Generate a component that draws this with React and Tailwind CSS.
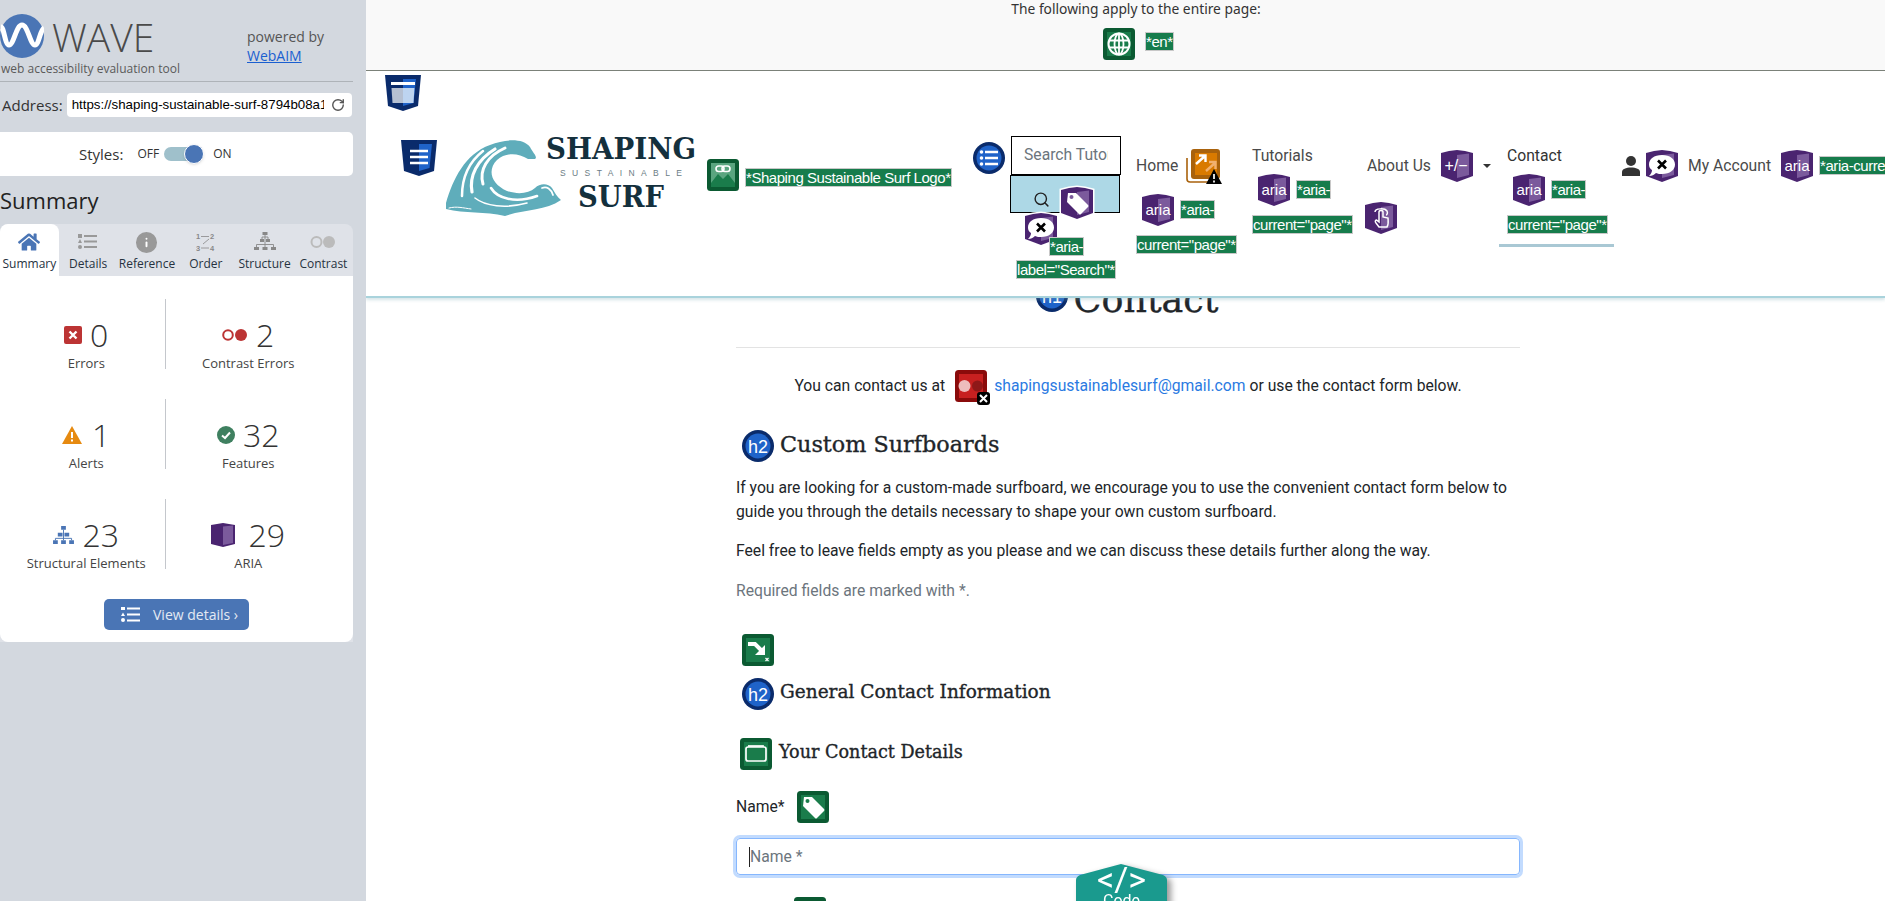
import React from "react";
import { Info, RotateCw, Search } from "lucide-react";
import { FaHome } from "react-icons/fa";

const SHIELD = "M0 3 L8 1 L16 0 L24 1 L32 3 L32 26 L16 32 L0 26 Z";

function AriaBase({ size = 32, children, outline = false }) {
  return (
    <svg width={size} height={size} viewBox="0 0 32 32" className="block shrink-0 overflow-visible">
      {outline && <path d={SHIELD} fill="#4a2470" stroke="#fff" strokeWidth="3" />}
      <path d={SHIELD} fill="#4a2470" />
      <path d="M16 5 L28 3.5 L28 25 L16 28 Z" fill="#7b5a9c" />
      {children}
    </svg>
  );
}

function AriaIcon() {
  return (
    <AriaBase>
      <text x="16" y="21" textAnchor="middle" fill="#fff" fontSize="15" fontFamily="Liberation Sans, sans-serif">
        aria
      </text>
    </AriaBase>
  );
}

function TagShape({ fill }) {
  return (
    <g>
      <path d="M7 6 L15 6 L27 18 Q28 19 27 20 L20 27 Q19 28 18 27 L6 15 Z" fill="#fff" />
      <circle cx="10.5" cy="10" r="2" fill={fill} />
    </g>
  );
}

function BubbleX() {
  return (
    <g>
      <path d="M16 5 C24 5 29 9 29 14.5 C29 20 24 24 16 24 C14 24 12 24 10 23 C8 25 6 26 3 26 C5 24 6 22 6 20 C4 19 3 17 3 14.5 C3 9 8 5 16 5 Z" fill="#fff" />
      <path d="M12 10.5 L20 18.5 M20 10.5 L12 18.5" stroke="#000" strokeWidth="2.6" />
    </g>
  );
}

function BlueShield({ lines = false }) {
  return (
    <svg width="36" height="36" viewBox="0 0 36 36" className="block shrink-0">
      <path d="M0 0 L36 0 L33 31 L18 36 L3 31 Z" fill="#0a2b6b" />
      <path d="M18 4 L31 4 L28.5 28 L18 31 Z" fill="#1f63c9" />
      {lines ? (
        <path d="M9 11 H27 M9 17 H27 M9 23 H27" stroke="#fff" strokeWidth="2.6" />
      ) : (
        <g>
          <path d="M6 7 H30 V10 H6 Z" fill="#fff" />
          <path d="M6.5 13 H18 V28 H7.5 Z" fill="#b5c0d2" />
          <path d="M18 13 H29.5 L28.5 28 H18 Z" fill="#bdd4f0" />
        </g>
      )}
    </svg>
  );
}

function GreenBox({ children }) {
  return (
    <svg width="32" height="32" viewBox="0 0 32 32" className="block shrink-0">
      <rect width="32" height="32" rx="3.5" fill="#0b5a32" />
      <rect x="4" y="4" width="24" height="24" fill="#1a7c4b" />
      {children}
    </svg>
  );
}

function HeadingIcon({ n }) {
  return (
    <svg width="32" height="32" viewBox="0 0 32 32" className="block shrink-0">
      <circle cx="16" cy="16" r="16" fill="#0a2b6b" />
      <circle cx="16" cy="16" r="12.5" fill="#1f63c9" />
      <text x="16" y="22.5" textAnchor="middle" fill="#fff" fontSize="18" fontFamily="Liberation Sans, sans-serif">
        {n}
      </text>
    </svg>
  );
}

function Lbl({ children }) {
  return (
    <span className="inline-block h-[19px] whitespace-nowrap border border-[#c8c8c8] bg-[#167c4c] font-['Liberation_Sans',sans-serif] text-[15px] leading-[17px] tracking-[-0.45px] text-white">
      {children}
    </span>
  );
}

function WaveLogo() {
  return (
    <svg width="255" height="84" viewBox="0 0 255 84" className="block shrink-0">
      <path
        d="M1 67 C8 43 20 18 45 9 C60 3 78 2 85 11 C88 17 93 21 90 23 L83 23 C72 16 60 17 52 24 C42 34 46 48 62 55 C74 59 84 57 90 52 C95 47 103 47 107 52 C110 57 112 61 116 64 C100 75 80 73 60 80 C40 75 20 78 1 73 Z"
        fill="#5fadbb"
      />
      <g fill="none" stroke="#fff" strokeLinecap="round">
        <path d="M17 60 C17 42 24 26 38 15" strokeWidth="2.5" />
        <path d="M27 56 C24 40 32 24 50 13" strokeWidth="3.2" />
        <path d="M38 48 C34 34 42 20 60 12" strokeWidth="3" />
        <path d="M46 52 C52 62 70 68 92 60" strokeWidth="2.6" />
        <path d="M30 62 C40 70 60 73 82 67" strokeWidth="1.6" />
        <path d="M97 52 C102 50 106 53 108 59" strokeWidth="1.8" />
        <path d="M4 72 C12 70 18 72 26 73" strokeWidth="1" />
      </g>
      <text x="101" y="23" fill="#14303d" fontFamily="DejaVu Serif, serif" fontWeight="700" fontSize="29" textLength="150" lengthAdjust="spacingAndGlyphs">
        SHAPING
      </text>
      <text x="115" y="40" fill="#6b7d85" fontFamily="Liberation Sans, sans-serif" fontSize="8.5" textLength="122">
        SUSTAINABLE
      </text>
      <text x="133" y="71" fill="#14303d" fontFamily="DejaVu Serif, serif" fontWeight="700" fontSize="29" textLength="86" lengthAdjust="spacingAndGlyphs">
        SURF
      </text>
    </svg>
  );
}

function NavAria({ first = "*aria-", second = 'current="page"*' }) {
  return (
    <>
      <div className="mt-3 flex">
        <div className="ml-[6px]">
          <AriaIcon />
        </div>
        <div className="ml-[6px] mt-[4px]">
          <Lbl>{first}</Lbl>
        </div>
      </div>
      <div className="mt-[7px]">
        <Lbl>{second}</Lbl>
      </div>
    </>
  );
}

function Tab({ icon, label, active = false }) {
  return (
    <div
      className={
        "flex h-[52px] w-[58.8px] flex-col items-center pt-[6px] " +
        (active ? "rounded-t-lg bg-white" : "")
      }
    >
      <div className="flex h-[24px] items-center">{icon}</div>
      <div className="mt-[2px] whitespace-nowrap text-[12px] leading-[16px] text-[#26323f]">{label}</div>
    </div>
  );
}

function Stat({ icon, num, label, gap = "gap-2", left = false }) {
  return (
    <div className={"flex h-[70px] flex-col items-center " + (left ? "border-r border-[#c4c7cc] pl-[8px]" : "")}>
      <div className={"mt-[18px] flex h-[36px] items-center " + gap}>
        {icon}
        <span className="text-[32px] font-light leading-[36px] text-[#333]">{num}</span>
      </div>
      <div className="mt-[1px] whitespace-nowrap text-[13px] leading-[18px] text-[#444]">{label}</div>
    </div>
  );
}

function Sidebar() {
  return (
    <aside className="flex h-[901px] w-[366px] shrink-0 flex-col bg-[#d3d8df] font-['Open_Sans',sans-serif]">
      <div className="flex h-[82px] w-[353px] border-b border-[#aeb3b8]">
        <div className="w-[247px] shrink-0">
          <div className="mt-[14px] flex h-[44px]">
            <svg width="44" height="44" viewBox="0 0 44 44" className="block shrink-0">
              <circle cx="22" cy="22" r="22" fill="#4a75b5" />
              <path d="M1 13 C4 13 5 31 9 31 C14 31 16 11 22 11 C28 11 30 31 35 31 C39 31 40 16 44 14" fill="none" stroke="#fff" strokeWidth="5" />
            </svg>
            <span className="ml-[8px] mt-[1px] text-[39px] font-light leading-[44px] text-[#4a4a4a]">WAVE</span>
          </div>
          <div className="ml-[1px] mt-[2px] whitespace-nowrap text-[12px] leading-[18px] text-[#5a5a5a]">
            web accessibility evaluation tool
          </div>
        </div>
        <div className="pt-[27px] text-[14px] leading-[19px] text-[#555]">
          <div>powered by</div>
          <div className="text-[#1a5fd0] underline">WebAIM</div>
        </div>
      </div>

      <div className="mt-[11px] flex h-[24px] w-[353px] items-center">
        <span className="ml-[2px] text-[15px] text-[#333]">Address:</span>
        <div className="ml-[4px] flex h-[24px] w-[285px] items-center rounded-[4px] bg-white pl-[5px]">
          <div className="w-[252px] overflow-hidden whitespace-nowrap font-['Liberation_Sans',sans-serif] text-[13.3px] text-black">
            https://shaping-sustainable-surf-8794b08a1c2f.herokuapp.com/contact
          </div>
          <RotateCw size={14} className="ml-[7px] text-[#555]" strokeWidth={2.4} />
        </div>
      </div>

      <div className="mt-[15px] flex h-[44px] w-[353px] items-center rounded-r-[5px] bg-white">
        <span className="ml-[79px] text-[15px] text-[#333]">Styles:</span>
        <span className="ml-[14px] text-[12px] text-[#333]">OFF</span>
        <div className="relative ml-[5px] h-[14px] w-[34px] rounded-full bg-[#9fc0cb]">
          <div className="absolute left-[20px] top-[-3px] h-[20px] w-[20px] rounded-full border border-white bg-[#4a75b5] shadow" />
        </div>
        <span className="ml-[15px] text-[12px] text-[#333]">ON</span>
      </div>

      <h2 className="mt-[1px] text-[22px] leading-[47px] text-[#222]">Summary</h2>

      <div className="w-[353px] rounded-t-lg bg-[#dfe2e8]">
        <div className="flex">
          <Tab active label="Summary" icon={<FaHome size={22} color="#4a75b5" />} />
          <Tab
            label="Details"
            icon={
              <svg width="20" height="16" viewBox="0 0 20 16">
                <path d="M0 0 H4 V4 H0 Z M0 13 a2 2 0 1 0 4 0 a2 2 0 1 0 -4 0 Z M2 5 L4 9 H0 Z" fill="#999" />
                <path d="M6 2 H19 M6 7.5 H19 M6 13 H19" stroke="#999" strokeWidth="2" />
              </svg>
            }
          />
          <Tab label="Reference" icon={<Info size={23} fill="#999" stroke="#999" className="[&>path]:stroke-white" />} />
          <Tab
            label="Order"
            icon={
              <svg width="20" height="20" viewBox="0 0 20 20" fontSize="7.5" fontWeight="700" fill="#888" fontFamily="Liberation Sans, sans-serif">
                <text x="0" y="7">1</text>
                <text x="14" y="7">2</text>
                <text x="0" y="19">3</text>
                <text x="14" y="19">4</text>
                <path d="M5 4.5 H13 M13 7 L7 12 M5 16 H13" stroke="#888" strokeWidth="0.8" fill="none" />
              </svg>
            }
          />
          <Tab
            label="Structure"
            icon={
              <svg width="22" height="20" viewBox="0 0 22 20" fill="#888">
                <path d="M8.5 0 H13.5 V3 H8.5 Z M6 7 H10 V10 H6 Z M12 7 H16 V10 H12 Z M0 15 H5 V18 H0 Z M8.5 15 H13.5 V18 H8.5 Z M17 15 H22 V18 H17 Z" />
                <path d="M11 3 V15 M8 5 H14 V7 M8 5 V7 M2.5 15 V12.5 H19.5 V15" stroke="#888" strokeWidth="0.9" fill="none" />
              </svg>
            }
          />
          <Tab
            label="Contrast"
            icon={
              <svg width="26" height="14" viewBox="0 0 26 14">
                <circle cx="6.5" cy="7" r="5" fill="none" stroke="#bbb" strokeWidth="2" />
                <circle cx="19" cy="7" r="6" fill="#bbb" />
              </svg>
            }
          />
        </div>

        <div className="h-[366px] rounded-b-lg bg-white pt-[23px]">
          <div className="grid w-[331px] grid-cols-2 gap-y-[30px]">
            <Stat
              left
              num="0"
              label="Errors"
              icon={
                <svg width="18" height="18" viewBox="0 0 18 18">
                  <rect width="18" height="18" rx="2" fill="#bc3434" />
                  <path d="M5.5 5.5 L12.5 12.5 M12.5 5.5 L5.5 12.5" stroke="#fff" strokeWidth="2.4" />
                </svg>
              }
            />
            <Stat
              num="2"
              label="Contrast Errors"
              gap="gap-[9px]"
              icon={
                <svg width="25" height="14" viewBox="0 0 25 14">
                  <circle cx="6" cy="7" r="4.8" fill="none" stroke="#bc3434" strokeWidth="2" />
                  <circle cx="19" cy="7" r="6" fill="#bc3434" />
                </svg>
              }
            />
            <Stat
              left
              num="1"
              label="Alerts"
              gap="gap-[10px]"
              icon={
                <svg width="20" height="18" viewBox="0 0 20 18">
                  <path d="M10 0 L20 18 H0 Z" fill="#e68a10" />
                  <path d="M10 6 V12 M10 13.5 V15.5" stroke="#fff" strokeWidth="2" />
                </svg>
              }
            />
            <Stat
              num="32"
              label="Features"
              icon={
                <svg width="18" height="18" viewBox="0 0 18 18">
                  <circle cx="9" cy="9" r="9" fill="#3f8060" />
                  <path d="M5 9.5 L8 12 L13 6.5" stroke="#fff" strokeWidth="2" fill="none" />
                </svg>
              }
            />
            <Stat
              left
              num="23"
              label="Structural Elements"
              icon={
                <svg width="21" height="19" viewBox="0 0 22 20" fill="#4a75b5">
                  <path d="M8.5 0 H13.5 V4 H8.5 Z M5 7 H10 V11 H5 Z M12 7 H17 V11 H12 Z M0 15 H5 V19 H0 Z M8.5 15 H13.5 V19 H8.5 Z M17 15 H22 V19 H17 Z" />
                  <path d="M11 4 V15 M2.5 15 V13 H19.5 V15" stroke="#4a75b5" strokeWidth="1" fill="none" />
                </svg>
              }
            />
            <Stat
              num="29"
              label="ARIA"
              gap="gap-[13px]"
              icon={
                <svg width="24" height="24" viewBox="0 0 24 24">
                  <path d="M0 2 L12 0 L24 2 V21 L12 24 L0 21 Z" fill="#4a2470" />
                  <path d="M12 3.5 L22 2.5 V20 L12 22 Z" fill="#7b5a9c" />
                </svg>
              }
            />
          </div>

          <button className="mx-auto mt-[30px] flex h-[31px] w-[145px] items-center rounded-[5px] bg-[#4a75b5] pl-[17px] text-[14px] text-[#e4eaf3]">
            <svg width="19" height="15" viewBox="0 0 19 15" fill="#fff" className="shrink-0">
              <path d="M0 0 H4 V3 H0 Z M2 5.5 L4 9 H0 Z M0 13 a2 2 0 1 0 4 0 a2 2 0 1 0 -4 0 Z" />
              <path d="M6 1.5 H19 M6 7.5 H19 M6 13.5 H19" stroke="#fff" strokeWidth="2" />
            </svg>
            <span className="ml-[13px] whitespace-nowrap">View details ›</span>
          </button>
        </div>
      </div>
    </aside>
  );
}

function TopBand() {
  return (
    <div className="h-[71px] border-b border-[#7c8279] bg-[#f9f9f9] text-[13.8px]">
      <div className="ml-[645px] w-[250px] whitespace-nowrap text-center leading-[18px] text-[#333]">
        The following apply to the entire page:
      </div>
      <div className="ml-[737px] mt-[10px] flex">
        <GreenBox>
          <circle cx="16" cy="16" r="10.5" fill="none" stroke="#fff" strokeWidth="2" />
          <ellipse cx="16" cy="16" rx="4.5" ry="10.5" fill="none" stroke="#fff" strokeWidth="1.8" />
          <path d="M6 12.5 H26 M6 19.5 H26 M16 5.5 V26.5" stroke="#fff" strokeWidth="1.8" />
        </GreenBox>
        <div className="ml-[10px] mt-[4px]">
          <Lbl>*en*</Lbl>
        </div>
      </div>
    </div>
  );
}

function Header() {
  return (
    <header className="relative z-10 h-[227px] overflow-hidden border-b-2 border-[#a9d3dc] bg-white font-['Roboto',sans-serif] text-[15.7px] text-[#4a4a4a] shadow-[0_2px_3px_rgba(120,170,180,0.3)]">
      <div className="ml-[19px] pt-[4px]">
        <BlueShield />
      </div>

      <div className="ml-[35px] mt-[25px] flex w-[1600px] items-start">
        <div className="mt-[4px] shrink-0">
          <BlueShield lines />
        </div>
        <div className="ml-[8px] shrink-0">
          <WaveLogo />
        </div>

        <div className="ml-[7px] mt-[23px] shrink-0">
          <GreenBox>
            <path d="M4 4 H28 V24 L21 15 L16 20 L11 15 L4 24 Z" fill="#5aa57f" />
            <rect x="9" y="7" width="8" height="5.5" rx="2.7" fill="none" stroke="#fff" strokeWidth="1.6" />
            <rect x="15" y="7" width="8" height="5.5" rx="2.7" fill="none" stroke="#fff" strokeWidth="1.6" />
          </GreenBox>
        </div>
        <div className="ml-[6px] mt-[30px] w-[206px] shrink-0">
          <Lbl>*Shaping Sustainable Surf Logo*</Lbl>
        </div>

        <div className="ml-[22px] mt-[6px] shrink-0">
          <svg width="32" height="32" viewBox="0 0 32 32" className="block">
            <circle cx="16" cy="16" r="16" fill="#0a2b6b" />
            <circle cx="16" cy="16" r="12.5" fill="#1f63c9" />
            <path d="M12 10 H25 M12 16 H25 M12 22 H25" stroke="#fff" strokeWidth="2.4" />
            <circle cx="8.5" cy="10" r="1.8" fill="#fff" />
            <circle cx="8.5" cy="16" r="1.8" fill="#fff" />
            <circle cx="8.5" cy="22" r="1.8" fill="#fff" />
          </svg>
        </div>

        {/* search */}
        <div className="ml-[5px] w-[111px] shrink-0">
          <div className="ml-[1px] h-[39px] w-[110px] border border-black pl-[12px] leading-[36px] text-[#6c757d]">
            <div className="w-[84px] overflow-hidden whitespace-nowrap">Search Tutorials</div>
          </div>
          <div className="relative h-[38px] w-[110px] border border-black bg-[#add8e6]">
            <Search size={17} strokeWidth={2} className="absolute left-[22px] top-[15px] text-[#222]" />
            <div className="absolute left-[50px] top-[11px]">
              <AriaBase outline>
                <TagShape fill="#7b5a9c" />
              </AriaBase>
            </div>
          </div>
          <div className="relative h-[66px]">
            <div className="absolute left-[15px] top-0">
              <AriaBase outline>
                <BubbleX />
              </AriaBase>
            </div>
            <div className="absolute left-[39px] top-[22px]">
              <Lbl> *aria-</Lbl>
            </div>
            <div className="absolute left-[6px] top-[45px]">
              <Lbl>label="Search"*</Lbl>
            </div>
          </div>
        </div>

        {/* home */}
        <div className="ml-[15px] mt-[14px] w-[100px] shrink-0">
          <div className="flex h-[32px] items-center">
            <span>Home</span>
            <div className="relative ml-[9px]">
              <svg width="33" height="35" viewBox="0 0 33 35" className="block overflow-visible">
                <path d="M0 9 V30 Q0 33 3 33 H24" fill="none" stroke="#a9620c" strokeWidth="1.6" />
                <rect x="4" y="0" width="29" height="30" rx="3" fill="#a9620c" />
                <rect x="8" y="4" width="22" height="22" fill="#d97a00" />
                <path d="M9 15 L18 7 M12 6.5 H18.5 V13" fill="none" stroke="#fff" strokeWidth="2.4" />
                <path d="M19 22 L28 14 M22 13 H28.5 V20" fill="none" stroke="#f0b070" strokeWidth="2.4" />
                <path d="M27 20 L35 35 H19 Z" fill="#000" />
                <path d="M27 25 V30 M27 31.5 V33.5" stroke="#fff" strokeWidth="1.7" />
              </svg>
            </div>
          </div>
          <NavAria />
        </div>

        {/* tutorials */}
        <div className="ml-[16px] mt-[9px] w-[100px] shrink-0">
          <div className="leading-[22px]">Tutorials</div>
          <div className="-mt-[5px]">
            <NavAria />
          </div>
        </div>

        {/* about */}
        <div className="ml-[15px] mt-[14px] w-[125px] shrink-0">
          <div className="flex h-[32px] items-center">
            <span className="whitespace-nowrap">About Us</span>
            <div className="ml-[10px]">
              <AriaBase>
                <text x="15" y="21" textAnchor="middle" fill="#fff" fontSize="16" fontFamily="Liberation Sans, sans-serif">
                  +/−
                </text>
              </AriaBase>
            </div>
            <span className="ml-[10px] h-0 w-0 border-x-[4px] border-t-[4px] border-x-transparent border-t-[#333]" />
          </div>
          <div className="-ml-[2px] mt-[20px]">
            <AriaBase>
              <path d="M10 10 C10 6 20 6 22 9 C23 11 22 13 21 13 M14 10 V20 L11.5 18 C10 18 10 20 11 21 L14 25 H22 C24 22 23 18 23 16 L18 15 V10 C18 8 14 8 14 10 Z" fill="none" stroke="#fff" strokeWidth="1.5" />
            </AriaBase>
          </div>
        </div>

        {/* contact */}
        <div className="ml-[7px] mt-[9px] h-[102px] w-[115px] shrink-0 border-b-[3px] border-[#a9c8d4] pl-[8px]">
          <div className="leading-[22px] text-[#333]">Contact</div>
          <div className="-mt-[5px]">
            <NavAria />
          </div>
        </div>

        {/* account */}
        <div className="ml-[8px] mt-[14px] flex h-[32px] shrink-0 items-center">
          <svg width="18" height="20" viewBox="0 0 18 20" className="block shrink-0">
            <circle cx="9" cy="5" r="5" fill="#333" />
            <path d="M0 20 V16 C0 13 4 11.5 9 11.5 C14 11.5 18 13 18 16 V20 Z" fill="#333" />
          </svg>
          <div className="ml-[6px]">
            <AriaBase>
              <BubbleX />
            </AriaBase>
          </div>
          <span className="ml-[10px] whitespace-nowrap">My Account</span>
          <div className="ml-[10px]">
            <AriaIcon />
          </div>
          <div className="ml-[6px]">
            <Lbl>*aria-current="page"*</Lbl>
          </div>
        </div>
      </div>
    </header>
  );
}

function Content() {
  const serif = "font-['DejaVu_Serif',serif] text-[#212529] [-webkit-text-stroke:0.35px_#212529]";
  return (
    <div className="-mt-[18px] ml-[370px] w-[784px] font-['Roboto',sans-serif] text-[15.7px] leading-[24px] text-[#212529]">
      <div className="flex h-[50px] items-start justify-center">
        <div className="-ml-[2px] flex items-start">
          <HeadingIcon n="h1" />
          <span className={"ml-[6px] text-[36.5px] leading-[40px] " + serif}>Contact</span>
        </div>
      </div>
      <hr className="mt-[17px] border-t border-[#e3e3e3]" />

      <div className="mt-[22px] flex h-[32px] items-center justify-center whitespace-nowrap">
        <span>You can contact us at</span>
        <div className="relative ml-[10px] mr-[7px]">
          <svg width="32" height="32" viewBox="0 0 32 32" className="block">
            <rect width="32" height="32" rx="3.5" fill="#8a0b0b" />
            <rect x="4" y="4" width="24" height="24" fill="#c72020" />
            <circle cx="9.5" cy="16" r="6" fill="#eebcbc" />
            <circle cx="22.5" cy="16" r="5.5" fill="#8f1818" />
          </svg>
          <div className="absolute left-[22px] top-[22px] flex h-[13px] w-[13px] items-center justify-center rounded-[3px] bg-black">
            <svg width="9" height="9" viewBox="0 0 9 9">
              <path d="M1 1 L8 8 M8 1 L1 8" stroke="#fff" strokeWidth="2" />
            </svg>
          </div>
        </div>
        <a className="text-[#2a7ae2]">shapingsustainablesurf@gmail.com</a>
        <span className="ml-[4px]">or use the contact form below.</span>
      </div>

      <div className="ml-[6px] mt-[28px] flex h-[32px] items-center">
        <HeadingIcon n="h2" />
        <span className={"ml-[6px] pb-[4px] text-[22.3px] " + serif}>Custom Surfboards</span>
      </div>
      <p className="mt-[14px]">
        If you are looking for a custom-made surfboard, we encourage you to use the convenient contact form below to
        guide you through the details necessary to shape your own custom surfboard.
      </p>
      <p className="mt-[15px]">Feel free to leave fields empty as you please and we can discuss these details further along the way.</p>
      <p className="mt-[16px] text-[#6c757d]">Required fields are marked with *.</p>

      <div className="ml-[6px] mt-[31px]">
        <GreenBox>
          <path d="M6 10 H13 L20 17" fill="none" stroke="#fff" strokeWidth="4" />
          <path d="M23 11 V21 H13 Z" fill="#fff" />
          <path d="M23.5 24 L26.5 27 M26.5 24 L23.5 27" stroke="#fff" strokeWidth="1.2" />
        </GreenBox>
      </div>
      <div className="ml-[6px] mt-[12px] flex h-[32px] items-center">
        <HeadingIcon n="h2" />
        <span className={"ml-[6px] pb-[4px] text-[18.5px] " + serif}>General Contact Information</span>
      </div>
      <div className="ml-[4px] mt-[28px] flex h-[32px] items-center">
        <GreenBox>
          <rect x="6" y="9" width="20" height="14" rx="2" fill="none" stroke="#fff" strokeWidth="1.7" />
          <path d="M8 8 H24" stroke="#fff" strokeWidth="1.7" />
        </GreenBox>
        <span className={"ml-[7px] pb-[4px] text-[17.6px] " + serif}>Your Contact Details</span>
      </div>
      <div className="mt-[21px] flex h-[32px] items-center">
        <span>Name*</span>
        <div className="ml-[12px]">
          <GreenBox>
            <TagShape fill="#1a7c4b" />
          </GreenBox>
        </div>
      </div>
      <div className="mt-[15px] flex h-[37px] items-center rounded-[4px] border border-[#86b7fe] pl-[12px] text-[#6c757d] shadow-[0_0_0_3px_rgba(13,110,253,0.25)]">
        <span className="border-l border-[#222] leading-[20px]">Name *</span>
      </div>
      <div className="ml-[58px] mt-[22px]">
        <GreenBox>
          <TagShape fill="#1a7c4b" />
        </GreenBox>
      </div>
    </div>
  );
}

export default function App() {
  return (
    <div className="relative flex h-[901px] w-full overflow-hidden bg-white">
      <Sidebar />
      <main className="h-[901px] min-w-0 flex-1 overflow-hidden">
        <TopBand />
        <Header />
        <Content />
      </main>

      {/* floating code toggle */}
      <div className="absolute left-[1076px] top-[864px] h-[60px] w-[91px] drop-shadow-[4px_3px_3px_rgba(0,0,0,0.4)]">
        <svg width="91" height="60" viewBox="0 0 91 60" className="block">
          <path d="M0 16 Q0 13 4 11 L45 0 L87 11 Q91 13 91 16 V60 H0 Z" fill="#1a9a8e" />
          <text x="45.5" y="27" textAnchor="middle" fill="#fff" fontSize="34" fontFamily="Roboto, sans-serif">
            {"</>"}
          </text>
          <text x="45.5" y="42" textAnchor="middle" fill="#fff" fontSize="16" fontFamily="Roboto, sans-serif">
            Code
          </text>
        </svg>
      </div>
    </div>
  );
}
